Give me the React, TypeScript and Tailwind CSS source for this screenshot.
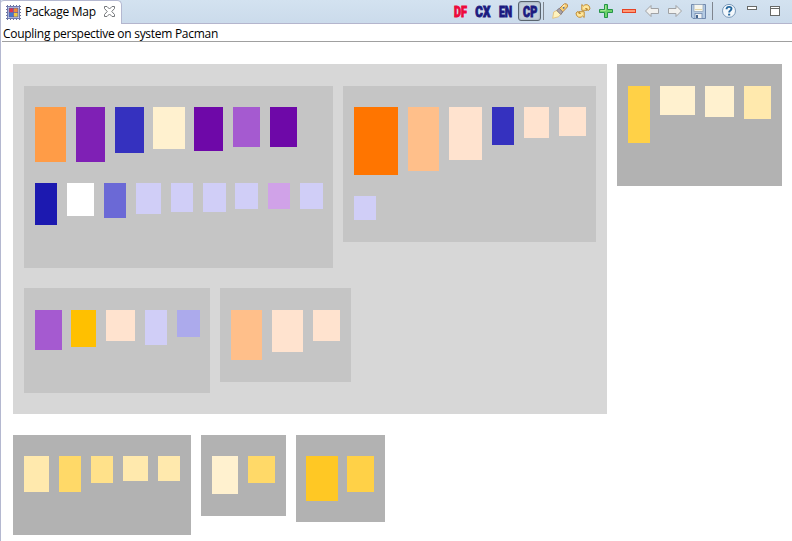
import type { ReactNode } from 'react';

// [gap before, width, height, colour]
type Block = [number, number, number, string];

interface PackageProps {
  width: number;
  height: number;
  before?: number;
  tone: string;
  rows: { top: number; height: number; blocks: Block[] }[];
}

function Package({ width, height, before = 0, tone, rows }: PackageProps) {
  return (
    <div className={`flex shrink-0 flex-col ${tone}`} style={{ width, height, marginLeft: before }}>
      {rows.map((row, i) => (
        <div key={i} className="flex items-start" style={{ marginTop: row.top, height: row.height }}>
          {row.blocks.map(([gap, w, h, color], j) => (
            <div key={j} className="shrink-0" style={{ marginLeft: gap, width: w, height: h, backgroundColor: color }} />
          ))}
        </div>
      ))}
    </div>
  );
}

const LAV = '#d0cef7';
const PEACH = '#ffe3cf';
const CREAM = '#fff1cf';
const SAND = '#ffe9ad';

function Icon({ children, className = '' }: { children: ReactNode; className?: string }) {
  return (
    <svg width="16" height="16" viewBox="0 0 16 16" className={`shrink-0 overflow-visible ${className}`}>
      {children}
    </svg>
  );
}

function ModeLabel({ text, color, x, w }: { text: string; color: string; x: number; w: number }) {
  return (
    <Icon>
      <text
        x={x}
        y="13.5"
        textLength={w}
        lengthAdjust="spacingAndGlyphs"
        fill={color}
        stroke={color}
        strokeWidth="0.9"
        className="font-['Roboto',sans-serif] text-[15px] font-black"
      >
        {text}
      </text>
    </Icon>
  );
}

const Separator = ({ className = '' }: { className?: string }) => (
  <div className={`h-[18px] w-px shrink-0 bg-[#7f858e] ${className}`} />
);

const backArrow = 'M1.5 8 L7 2.5 V5.5 H14.5 V10.5 H7 V13.5 Z';

function Toolbar() {
  return (
    <div className="flex h-[22px] items-center pr-[9px]">
      <div className="flex items-center gap-[7px]">
        <ModeLabel text="DF" color="#ee0a3c" x={2} w={13} />
        <ModeLabel text="CX" color="#1b1b80" x={0.3} w={15} />
        <ModeLabel text="EN" color="#1b1b80" x={1} w={13.2} />
      </div>
      <div className="ml-1 flex h-5 w-[23px] items-center justify-center rounded-[3px] border border-[#59646f] bg-[#c3cfdb] shadow-[inset_0_0_2px_#8793a0]">
        <ModeLabel text="CP" color="#1b1b80" x={1.1} w={14.2} />
      </div>
      <Separator className="ml-[2px]" />
      <div className="ml-2 flex items-center gap-[7px]">
        <Icon>
          <path d="M.7 15.3 L1.7 9 L5.5 7 L9.3 10.8 L6.5 13.8 Z" fill="#fff3bd" stroke="#e3bd72" strokeWidth=".8" />
          <path d="M7 6 L12 1 Q15 0 15.5 2 Q16 4 14 5.5 L10 9.5 Z" fill="#f7ce75" stroke="#bb8540" />
          <path d="M4.8 7.5 L7.3 5.3 L10.7 9 L8.8 11.5 Z" fill="#aaa4a8" stroke="#837b83" />
          <path d="M10.5 3.8 L12.8 1.8" stroke="#fff0bd" strokeWidth="1.2" />
          <circle cx="11.7" cy="4.8" r=".9" fill="#4568a0" />
        </Icon>
        <Icon>
          <path d="M6.8 1.5 V7.3 H12.3 L10.4 5.6 Q12.4 4.5 13.2 7.5 L15 6 Q14.5 1.5 11 1.7 Q9.5 1.8 8.4 3 Z" fill="#ffe79c" stroke="#bd8526" strokeWidth=".9" />
          <path d="M6.8 1.5 V7.3 H12.3 L10.4 5.6 Q12.4 4.5 13.2 7.5 L15 6 Q14.5 1.5 11 1.7 Q9.5 1.8 8.4 3 Z" transform="rotate(180 8 8)" fill="#ffe79c" stroke="#bd8526" strokeWidth=".9" />
        </Icon>
        <Icon>
          <path d="M6.5 1.5 H9.5 V6.5 H14.5 V9.5 H9.5 V14.5 H6.5 V9.5 H1.5 V6.5 H6.5 Z" fill="#6fd36b" stroke="#259448" />
          <path d="M7.5 2.5 V7.5 H2.5" fill="none" stroke="#a5e795" />
        </Icon>
        <Icon>
          <rect x="1.5" y="6.5" width="13" height="3" fill="#ff9a76" stroke="#e64224" />
        </Icon>
        <Icon>
          <path d={backArrow} fill="#f1f1ef" stroke="#a0a2a5" />
        </Icon>
        <Icon>
          <path d={backArrow} transform="matrix(-1 0 0 1 16 0)" fill="#f1f1ef" stroke="#a0a2a5" />
        </Icon>
        <Icon>
          <path d="M1.5 1.5 H15.5 V15.5 H3 L1.5 14 Z" fill="#b4cbe4" stroke="#7189ad" />
          <rect x="4" y="1.5" width="9" height="7" fill="#f6f6ee" stroke="#8ea0b8" strokeWidth=".7" />
          <path d="M5 6.5 H12" stroke="#e4d5a5" />
          <rect x="5" y="10.5" width="7" height="5" fill="#eef1f4" stroke="#7189ad" strokeWidth=".8" />
          <rect x="6" y="12" width="2" height="3" fill="#45658e" />
        </Icon>
      </div>
      <Separator className="ml-[6px]" />
      <div className="ml-2 flex items-center gap-[7px]">
        <Icon>
          <circle cx="8" cy="7.9" r="6.5" fill="#f3f8fc" stroke="#7998b8" />
          <path d="M5.6 6.2 V5.5 Q6 3.9 8 3.9 Q10.5 3.9 10.5 5.8 Q10.5 7 9 7.8 Q8.2 8.2 8.2 9.5" fill="none" stroke="#23669d" strokeWidth="1.9" />
          <rect x="7.1" y="10.7" width="2.1" height="1.8" fill="#23669d" />
        </Icon>
        <Icon>
          <rect x="3.5" y="3.5" width="9" height="3" fill="#fff" stroke="#686a68" />
        </Icon>
        <Icon>
          <rect x="3.5" y="3.5" width="9" height="9" fill="#fff" stroke="#686a68" />
          <path d="M3 5.5 H13" stroke="#686a68" />
        </Icon>
      </div>
    </div>
  );
}

function PackageIcon() {
  return (
    <Icon className="ml-[5px]">
      <path d="M1 .5 H15 M1 14.5 H15" stroke="#6b719c" strokeDasharray="1 2" />
      <path d="M.5 1 V15 M14.5 1 V15" stroke="#6b719c" strokeDasharray="1 2" />
      <rect x="1.5" y="1.5" width="12" height="12" fill="#dfe9f8" stroke="#6f7ab0" />
      <rect x="3.5" y="3.5" width="8" height="8" fill="#fff" stroke="#5a5fa0" />
      <rect x="3" y="3" width="4.5" height="4.5" fill="#e0344c" />
      <rect x="7.5" y="3" width="4.5" height="4.5" fill="#f08b38" />
      <rect x="3" y="7.5" width="4.5" height="4.5" fill="#4278cf" />
      <rect x="7.5" y="7.5" width="4.5" height="4.5" fill="#efca42" />
      <path d="M7.5 3 V12 M3 7.5 H12" stroke="#6a5a9d" strokeWidth=".8" />
      <rect x="3" y="3" width="9" height="9" fill="none" stroke="#5a5fa0" strokeWidth=".8" />
    </Icon>
  );
}

export default function App() {
  return (
    <div className="flex h-[541px] w-[792px] flex-col overflow-hidden border-l border-[#b4b8d0] bg-white font-['Open_Sans','Noto_Sans',sans-serif] text-[12px] text-black">
      <header className="flex h-6 shrink-0 justify-between border-b border-[#b4b5cd] bg-linear-to-b from-[#d3e2f0] to-[#cbdbeb]">
        <div className="flex h-6 w-[121px] items-center rounded-tr-[5px] rounded-tl-[3px] border-t border-r border-[#b4b8d0] bg-white">
          <PackageIcon />
          <span className="ml-[3px] w-[73px] -translate-y-px whitespace-nowrap leading-4 tracking-[-0.27px]">Package Map</span>
          <svg width="11" height="11" viewBox="0 0 11 11" className="ml-[6px] -translate-y-px">
            <path d="M.5 .5 H3 L5.5 3 L8 .5 H10.5 V2.5 L7.8 5.5 L10.5 8.5 V10.5 H8 L5.5 8 L3 10.5 H.5 V8.5 L3.2 5.5 L.5 2.5 Z" fill="#fff" stroke="#74777a" />
          </svg>
        </div>
        <Toolbar />
      </header>
      <div className="ml-px flex h-[18px] shrink-0 items-center border-b border-[#a0a0a0] pl-px">
        <span className="mt-[3px] whitespace-nowrap leading-4 tracking-[-0.28px]">Coupling perspective on system Pacman</span>
      </div>
      <main className="flex flex-col pt-[22px] pl-3">
        <div className="flex items-start">
          <section className="h-[350px] w-[594px] shrink-0 bg-[#d7d7d7] pt-[22px] pl-[11px]">
            <div className="flex h-[202px] items-start">
              <Package
                width={309}
                height={182}
                tone="bg-[#c5c5c5]"
                rows={[
                  {
                    top: 21,
                    height: 55,
                    blocks: [[11, 31, 55, '#ff9c47'], [10, 29, 55, '#7f20b5'], [10, 29, 46, '#3531bf'], [9, 32, 42, CREAM], [9, 29, 44, '#6e08a8'], [10, 27, 40, '#a55ad0'], [10, 27, 40, '#6e08a8']],
                  },
                  {
                    top: 21,
                    height: 42,
                    blocks: [[11, 22, 42, '#1c19b0'], [10, 27, 33, '#ffffff'], [10, 22, 35, '#6b69d6'], [10, 25, 31, LAV], [10, 22, 29, LAV], [10, 23, 29, LAV], [9, 23, 26, LAV], [10, 22, 26, '#d0a2e8'], [10, 23, 26, LAV]],
                  },
                ]}
              />
              <Package
                width={253}
                height={156}
                before={10}
                tone="bg-[#c5c5c5]"
                rows={[
                  {
                    top: 21,
                    height: 68,
                    blocks: [[11, 44, 68, '#ff7500'], [10, 31, 64, '#ffbf8a'], [10, 33, 53, PEACH], [10, 22, 38, '#3531bf'], [10, 25, 31, PEACH], [10, 27, 29, PEACH]],
                  },
                  { top: 21, height: 24, blocks: [[11, 22, 24, LAV]] },
                ]}
              />
            </div>
            <div className="flex items-start">
              <Package
                width={186}
                height={105}
                tone="bg-[#c5c5c5]"
                rows={[{ top: 22, height: 40, blocks: [[11, 27, 40, '#a55ad0'], [9, 25, 37, '#ffc000'], [10, 29, 31, PEACH], [10, 22, 35, LAV], [10, 23, 27, '#acaaec']] }]}
              />
              <Package
                width={131}
                height={94}
                before={10}
                tone="bg-[#c5c5c5]"
                rows={[{ top: 22, height: 50, blocks: [[11, 31, 50, '#ffbf8a'], [10, 31, 42, PEACH], [10, 27, 31, PEACH]] }]}
              />
            </div>
          </section>
          <Package
            width={165}
            height={122}
            before={10}
            tone="bg-[#b2b2b2]"
            rows={[{ top: 22, height: 57, blocks: [[11, 22, 57, '#ffd147'], [10, 35, 29, CREAM], [10, 29, 31, CREAM], [10, 27, 33, SAND]] }]}
          />
        </div>
        <div className="mt-[21px] flex items-start">
          <Package
            width={178}
            height={100}
            tone="bg-[#b2b2b2]"
            rows={[{ top: 21, height: 36, blocks: [[11, 25, 36, SAND], [10, 22, 36, '#ffd968'], [10, 22, 27, '#ffe18a'], [10, 25, 25, SAND], [10, 22, 25, SAND]] }]}
          />
          <Package
            width={85}
            height={81}
            before={10}
            tone="bg-[#b2b2b2]"
            rows={[{ top: 21, height: 38, blocks: [[11, 26, 38, CREAM], [10, 27, 27, '#ffd968']] }]}
          />
          <Package
            width={89}
            height={87}
            before={10}
            tone="bg-[#b2b2b2]"
            rows={[{ top: 21, height: 45, blocks: [[10, 32, 45, '#ffc824'], [9, 27, 36, '#ffd147']] }]}
          />
        </div>
      </main>
    </div>
  );
}
